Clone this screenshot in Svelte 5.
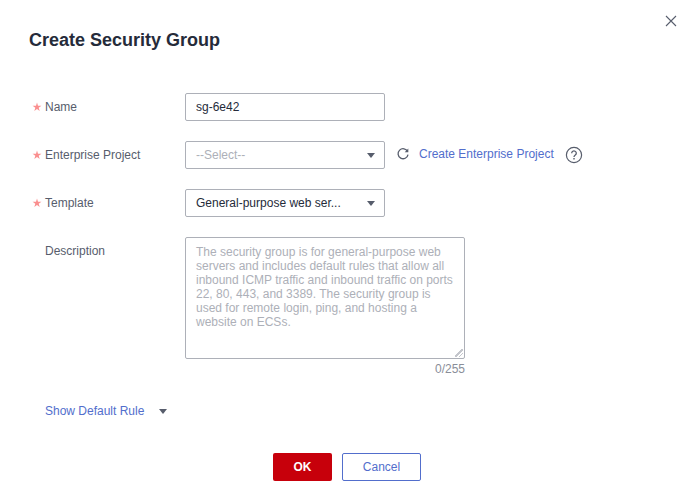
<script>
  let name = 'sg-6e42'
  let rules = false
  const placeholder = 'The security group is for general-purpose web servers and includes default rules that allow all inbound ICMP traffic and inbound traffic on ports 22, 80, 443, and 3389. The security group is used for remote login, ping, and hosting a website on ECSs.'
</script>

{#snippet star()}
  <svg class="star" width="10" height="10" viewBox="0 0 10 10">
    <path d="M5 .6l1 3.100 3.400.1-2.700 2 1 3.300L5 7.100 2.300 9.100l1-3.300-2.700-2 3.400-.1z" fill="#fa8f8f" />
  </svg>
{/snippet}

<main class="dialog">
  <button type="button" class="close" aria-label="Close">
    <svg width="12" height="12" viewBox="0 0 12 12"><path d="M1 1l10 10M11 1L1 11" stroke="#575d6c" stroke-width="1.1" fill="none" /></svg>
  </button>

  <h1>Create Security Group</h1>

  <form class="form">
    <div class="row">
      <span class="label">{@render star()}Name</span>
      <input class="field" bind:value={name} />
    </div>

    <div class="row">
      <span class="label">{@render star()}Enterprise Project</span>
      <div class="field select placeholder">--Select--<span class="caret"></span></div>
      <svg class="refresh" width="14" height="14" viewBox="0 0 14 14">
        <path d="M11.6 4.6A5 5 0 1 0 12 7.6" stroke="#575d6c" stroke-width="1.3" fill="none" />
        <path d="M12.3 1.6v3.6H8.7z" fill="#575d6c" />
      </svg>
      <a class="link create" href="#top">Create Enterprise Project</a>
      <svg class="help" width="18" height="18" viewBox="0 0 18 18">
        <circle cx="9" cy="9" r="7.6" stroke="#575d6c" stroke-width="1.2" fill="none" />
        <path d="M6.700 7.200a2.300 2.200 0 1 1 3.600 1.800c-.8.600-1.300 1-1.300 2" stroke="#575d6c" stroke-width="1.3" fill="none" />
        <rect x="8.300" y="12" width="1.4" height="1.5" fill="#575d6c" />
      </svg>
    </div>

    <div class="row">
      <span class="label">{@render star()}Template</span>
      <div class="field select">General-purpose web ser...<span class="caret"></span></div>
    </div>

    <div class="row top">
      <span class="label">Description</span>
      <div class="area">
        <textarea {placeholder}></textarea>
        <span class="count">0/255</span>
      </div>
    </div>

    <button type="button" class="toggle" onclick={() => (rules = !rules)}>
      <span class="link">Show Default Rule</span><span class="caret"></span>
    </button>

    <div class="actions">
      <button type="button" class="btn ok">OK</button>
      <button type="button" class="btn cancel">Cancel</button>
    </div>
  </form>
</main>

<style>
  :global(body) {
    background: #fff;
  }

  * {
    box-sizing: border-box;
  }

  .dialog {
    position: relative;
    width: 685px;
    height: 500px;
    padding: 29px 0 0 29px;
    overflow: hidden;
    font-family: "Liberation Sans", Arial, sans-serif;
    font-size: 12px;
    color: #252b3a;
    background: #fff;
  }

  .close {
    position: absolute;
    top: 15px;
    right: 8px;
    width: 12px;
    height: 12px;
    padding: 0;
    border: 0;
    background: none;
    display: flex;
  }

  h1 {
    margin: 0 0 42px;
    font-size: 18px;
    line-height: 22px;
    font-weight: 700;
    color: #252b3a;
  }

  .form {
    display: flex;
    flex-direction: column;
  }

  .row {
    display: flex;
    align-items: center;
    height: 28px;
    margin-bottom: 20px;
  }

  .row.top {
    align-items: flex-start;
    height: auto;
    margin-bottom: 23px;
  }

  .label {
    display: flex;
    align-items: center;
    width: 156px;
    padding-left: 16px;
    position: relative;
    line-height: 28px;
    color: #575d6c;
  }

  .star {
    position: absolute;
    left: 3px;
    top: 9px;
  }

  .field {
    width: 200px;
    height: 28px;
    padding: 0 10px;
    border: 1px solid #adb0b8;
    border-radius: 2px;
    font: inherit;
    line-height: 26px;
    color: #252b3a;
    background: #fff;
    outline: none;
  }

  .select {
    display: flex;
    align-items: center;
    justify-content: space-between;
    padding-right: 9px;
  }

  .placeholder {
    color: #adb0b8;
  }

  .caret {
    width: 0;
    height: 0;
    border-left: 4px solid transparent;
    border-right: 4px solid transparent;
    border-top: 5px solid #575d6c;
  }

  .refresh {
    margin: -2px 0 0 11px;
  }

  .link {
    color: #526ecc;
    text-decoration: none;
  }

  .create {
    margin: -2px 0 0 9px;
  }

  .help {
    margin-left: 11px;
  }

  .area {
    display: flex;
    flex-direction: column;
    align-items: flex-end;
    width: 280px;
  }

  textarea {
    display: block;
    width: 280px;
    height: 122px;
    padding: 7px 10px;
    border: 1px solid #adb0b8;
    border-radius: 2px;
    font: inherit;
    line-height: 14px;
    outline: none;
  }

  textarea::placeholder {
    color: #adb0b8;
    opacity: 1;
  }

  textarea::-webkit-resizer {
    background:
      linear-gradient(135deg, transparent 42%, #c4c6cc 42% 58%, transparent 58%) right 1px bottom 1px / 8px 8px no-repeat,
      linear-gradient(135deg, transparent 38%, #c4c6cc 38% 62%, transparent 62%) right 1px bottom 1px / 4px 4px no-repeat;
  }

  .count {
    line-height: 20px;
    color: #8a8e99;
  }

  .toggle {
    display: flex;
    align-items: center;
    gap: 15px;
    align-self: flex-start;
    height: 18px;
    margin: 0 0 33px 16px;
    padding: 0;
    border: 0;
    background: none;
    font: inherit;
  }

  .actions {
    display: flex;
    gap: 10px;
    padding-left: 244px;
  }

  .btn {
    height: 28px;
    border-radius: 2px;
    font: inherit;
    padding: 0;
  }

  .ok {
    width: 59px;
    border: 0;
    font-weight: 700;
    color: #fff;
    background: #c7000b;
  }

  .cancel {
    width: 79px;
    border: 1px solid #526ecc;
    color: #526ecc;
    background: #fff;
  }
</style>
